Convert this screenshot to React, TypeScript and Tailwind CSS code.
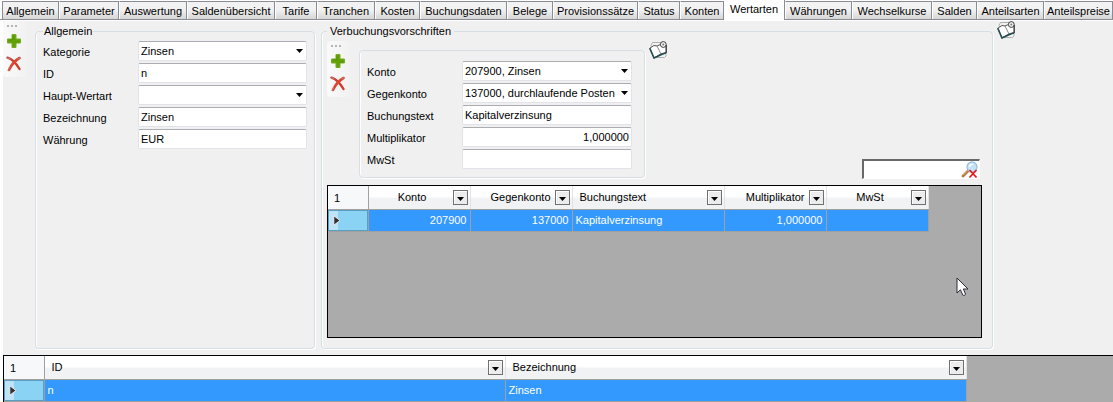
import React, { useId, useState } from "react";
import clsx from "clsx";

const tabs = [
  "Allgemein", "Parameter", "Auswertung", "Saldenübersicht", "Tarife", "Tranchen",
  "Kosten", "Buchungsdaten", "Belege", "Provisionssätze", "Status", "Konten",
  "Wertarten", "Währungen", "Wechselkurse", "Salden", "Anteilsarten", "Anteilspreise",
];

function PlusIcon() {
  return (
    <svg width="16" height="16" viewBox="0 0 16 16" aria-hidden="true">
      <path
        d="M6 1.500h4v4.500h4.500v4H10v4.500H6V10H1.500V6H6z"
        fill="#63a108"
        stroke="#74ad20"
        strokeWidth="1"
        strokeLinejoin="round"
      />
      <path d="M7 3v4H3M9 9h4" fill="none" stroke="#579400" strokeWidth="1" />
    </svg>
  );
}

function DeleteIcon() {
  return (
    <svg width="16" height="16" viewBox="0 0 16 16" aria-hidden="true">
      <path d="M1.500 1.700C6 3 10.500 8 13.500 13" fill="none" stroke="#cf3c2a" strokeWidth="2.400" strokeLinecap="round" />
      <path d="M13.500 2C9 4.500 5.500 8.500 3 14" fill="none" stroke="#dd4630" strokeWidth="2.600" strokeLinecap="round" />
      <path d="M.5 1.500L4.500 3M11.500 3l3.500-1.500M2 15l1.500-4" fill="none" stroke="#b0827c" strokeWidth="1" />
    </svg>
  );
}

function BookIcon() {
  return (
    <svg width="18" height="18" viewBox="0 0 18 18" aria-hidden="true">
      <path d="M2 4.500L3.500 1.500h10L17 4v11l-1.500 1.500H6z" fill="#f2f2f2" stroke="#b0b0b0" />
      <path d="M.8 7.200L5 4.500l3 .5 4-1.700 5 .7v8l-4.500.5L5 17z" fill="#fff" stroke="#555" />
      <path d="M8 5l4 8" stroke="#888" fill="none" />
      <path d="M.8 7.200L5 17l7.500-3.500 4.500-1.700" fill="none" stroke="#1f4d50" strokeWidth="1.600" />
      <circle cx="14.300" cy="3.500" r="2.900" fill="#f5f5f5" stroke="#3c3c3c" />
      <circle cx="14.300" cy="3.500" r="1" fill="#777" />
      <path d="M17.300 4v8" stroke="#3c3c3c" />
    </svg>
  );
}

function SearchClearIcon() {
  return (
    <svg width="18" height="18" viewBox="0 0 18 18" aria-hidden="true">
      <path d="M2 15l5.500-5.500" stroke="#b5723c" strokeWidth="2.800" strokeLinecap="round" />
      <path d="M2 14.300l5-5" stroke="#e9b27c" strokeWidth="1" />
      <circle cx="11" cy="6" r="5" fill="#c4e3fa" stroke="#9dbfe0" strokeWidth="1.300" />
      <path d="M8.500 6c0-2 1.500-3 3.500-2.700" stroke="#fff" strokeWidth="1.500" fill="none" />
      <path d="M8.500 9l7 7.500M15.500 9l-7 7.500" stroke="#e8181c" strokeWidth="1.800" />
    </svg>
  );
}

function Arrow() {
  return (
    <svg width="7" height="4" viewBox="0 0 7 4" aria-hidden="true">
      <path d="M0 0h7L3.500 4z" fill="#000" />
    </svg>
  );
}

function Pointer() {
  return (
    <svg width="13" height="20" viewBox="0 0 13 20" aria-hidden="true">
      <path
        d="M1 1v15l3.400-3.200 2.500 5.400c1 .6 2.600 0 2.600-1.200L7.300 12H12z"
        fill="#fff"
        stroke="#2b2b3c"
        strokeLinejoin="round"
      />
    </svg>
  );
}

function Toolbar() {
  return (
    <div className="flex h-14 w-6 shrink-0 flex-col items-center rounded-sm bg-linear-to-r from-[#fafafa] to-[#f1f1f1]">
      <div className="flex h-3 items-start gap-0.5 self-start pt-1 pl-1">
        <span className="size-0.5 bg-[#b4b4b4]" />
        <span className="size-0.5 bg-[#b4b4b4]" />
        <span className="size-0.5 bg-[#b4b4b4]" />
      </div>
      <button type="button" aria-label="Hinzufügen" className="-ml-0.5 flex h-4 items-center">
        <PlusIcon />
      </button>
      <button type="button" aria-label="Löschen" className="mt-[7px] -ml-0.5 flex h-4 items-center">
        <DeleteIcon />
      </button>
    </div>
  );
}

type FieldProps = { label: string; value?: string; select?: boolean; right?: boolean };

function Field({ label, value = "", select, right }: FieldProps) {
  const id = useId();
  const box =
    "h-5 w-full appearance-none rounded-xs border border-[#e2e3ea] border-t-[#abadb3] bg-white px-0.5 text-[11px] leading-4 outline-none";
  return (
    <div className="flex h-[22px] items-start">
      <label htmlFor={id} className="w-[95px] shrink-0 pt-[3px] leading-4">
        {label}
      </label>
      <div className="relative w-[170px]">
        {select ? (
          <>
            <select id={id} className={clsx(box, "pr-4")} defaultValue={value}>
              <option>{value}</option>
            </select>
            <span className="pointer-events-none absolute top-2 right-1">
              <Arrow />
            </span>
          </>
        ) : (
          <input id={id} type="text" className={clsx(box, right && "text-right")} defaultValue={value} />
        )}
      </div>
    </div>
  );
}

const frame = "min-w-0 rounded-sm border border-[#d5dfe5] shadow-[inset_1px_0_0_#fff,1px_1px_0_#fff]";

type Column = { label: string; value: string; width: string; align: string; head: string };

function DataGrid({ columns, width }: { columns: Column[]; width: string }) {
  return (
    <table className={clsx("table-fixed border-collapse", width)}>
      <colgroup>
        <col className="w-[40px]" />
        {columns.map((c) => (
          <col key={c.label} className={c.width} />
        ))}
      </colgroup>
      <thead>
        <tr className="h-[23px]">
          <th className="border-r border-b border-[#a0a0a0] bg-[#f7f8fa] px-1.5 pt-0.5 pb-0 text-left font-normal">1</th>
          {columns.map((c) => (
            <th
              key={c.label}
              className="border-r border-b border-r-[#e0e2e5] border-b-[#a0a0a0] bg-linear-to-b from-white from-45% to-[#f1f2f4] to-55% p-0 font-normal"
            >
              <div className="flex items-center gap-1 pr-0.5 pl-[7px]">
                <span className={clsx("flex-1", c.head)}>{c.label}</span>
                <button
                  type="button"
                  aria-label={`${c.label} filtern`}
                  className="flex size-[15px] shrink-0 items-end justify-center border border-[#707070] bg-[#ececec] pb-[3px] shadow-[inset_1px_1px_0_#fff]"
                >
                  <Arrow />
                </button>
              </div>
            </th>
          ))}
        </tr>
      </thead>
      <tbody>
        <tr className="h-[22px] bg-[#3399ff] text-white">
          <th className="border-r border-b border-[#a0a0a0] p-0">
            <div className="flex h-[21px] items-center border border-[#5b9fc0] bg-linear-to-r from-[#bfe3f6] from-25% to-[#8bd3f5] to-25% pl-1">
              <svg width="8" height="11" viewBox="0 0 8 11" aria-hidden="true">
                <path d="M.8.8L7 5.500.8 10.200z" fill="#333" stroke="#fff" strokeWidth=".8" />
              </svg>
            </div>
          </th>
          {columns.map((c) => (
            <td key={c.label} className={clsx("border-r border-b border-[#a0a0a0] px-[3px] py-0", c.align)}>
              {c.value}
            </td>
          ))}
        </tr>
      </tbody>
    </table>
  );
}

const postings: Column[] = [
  { label: "Konto", value: "207900", width: "w-[102px]", align: "text-right", head: "text-center" },
  { label: "Gegenkonto", value: "137000", width: "w-[102px]", align: "text-right", head: "text-right" },
  { label: "Buchungstext", value: "Kapitalverzinsung", width: "w-[152px]", align: "text-left", head: "text-left" },
  { label: "Multiplikator", value: "1,000000", width: "w-[102px]", align: "text-right", head: "text-right" },
  { label: "MwSt", value: "", width: "w-[102px]", align: "text-right", head: "text-center" },
];

const kinds: Column[] = [
  { label: "ID", value: "n", width: "w-[461px]", align: "text-left", head: "text-left" },
  { label: "Bezeichnung", value: "Zinsen", width: "w-[461px]", align: "text-left", head: "text-left" },
];

export default function App() {
  const [active, setActive] = useState("Wertarten");
  return (
    <div className="flex min-h-screen flex-col bg-white font-['Liberation_Sans',Arial,sans-serif] text-[11px] leading-4 text-black">
      <nav
        role="tablist"
        className="grid h-5 grid-cols-[57fr_60fr_68fr_88fr_42fr_58fr_45fr_87fr_46fr_85fr_42fr_44fr_61fr_67fr_80fr_45fr_67fr_69fr] border-b border-[#898c95] pl-0.5"
      >
        {tabs.map((tab) => (
          <button
            key={tab}
            type="button"
            role="tab"
            aria-selected={tab === active}
            onClick={() => setActive(tab)}
            className={clsx(
              "min-w-0 border-r border-r-[#898c95] text-center whitespace-nowrap",
              tab === active
                ? "-mb-px h-5 bg-white pb-0.5"
                : "mt-px h-[18px] border-t border-l border-t-[#898c95] border-l-white bg-linear-to-b from-[#f2f2f2] from-45% to-[#d6d6d6] first:border-l-[#898c95]",
            )}
          >
            {tab}
          </button>
        ))}
      </nav>

      <main className="mt-px ml-[3px] flex flex-1 flex-col bg-[#f0f0f0]">
        <div className="flex h-[334px] items-start pr-[98px]">
          <Toolbar />
          <fieldset className={clsx(frame, "mt-1 ml-2 h-[324px] w-[280px] shrink-0 px-[7px]")}>
            <legend className="px-px leading-3">Allgemein</legend>
            <div className="mt-1">
              <Field label="Kategorie" value="Zinsen" select />
              <Field label="ID" value="n" />
              <Field label="Haupt-Wertart" select />
              <Field label="Bezeichnung" value="Zinsen" />
              <Field label="Währung" value="EUR" />
            </div>
          </fieldset>

          <fieldset className={clsx(frame, "mt-1 ml-1.5 h-[324px] flex-1 pr-[10px] pl-[5px]")}>
            <legend className="px-[3px] leading-3">Verbuchungsvorschriften</legend>
            <div className="mt-1 flex items-start">
              <Toolbar />
              <div className={clsx(frame, "mt-[9px] ml-2 h-32 w-[286px] shrink-0 px-[7px] pt-[10px]")}>
                <Field label="Konto" value="207900, Zinsen" select />
                <Field label="Gegenkonto" value="137000, durchlaufende Posten" select />
                <Field label="Buchungstext" value="Kapitalverzinsung" />
                <Field label="Multiplikator" value="1,000000" right />
                <Field label="MwSt" />
              </div>
              <button type="button" aria-label="Verbuchungsvorschriften anpassen" className="ml-1">
                <BookIcon />
              </button>
              <div className="mt-[118px] mr-0.5 ml-auto flex h-5 w-[118px] items-center border border-t-2 border-l-2 border-white border-t-[#696969] border-l-[#696969] bg-white">
                <input type="text" aria-label="Suchen" className="h-4 min-w-0 flex-1 px-0.5 outline-none" />
                <button type="button" aria-label="Suche löschen" className="shrink-0">
                  <SearchClearIcon />
                </button>
              </div>
            </div>
            <div className="relative mt-[6px] h-[153px] overflow-hidden border border-black bg-[#ababab]">
              <DataGrid columns={postings} width="w-[600px]" />
              <span className="pointer-events-none absolute top-[91px] right-3">
                <Pointer />
              </span>
            </div>
          </fieldset>
          <button type="button" aria-label="Ansicht anpassen" className="ml-1 shrink-0">
            <BookIcon />
          </button>
        </div>

        <div className="flex-1 overflow-hidden border-t border-l border-black bg-[#ababab]">
          <DataGrid columns={kinds} width="w-[962px]" />
        </div>
      </main>
    </div>
  );
}
